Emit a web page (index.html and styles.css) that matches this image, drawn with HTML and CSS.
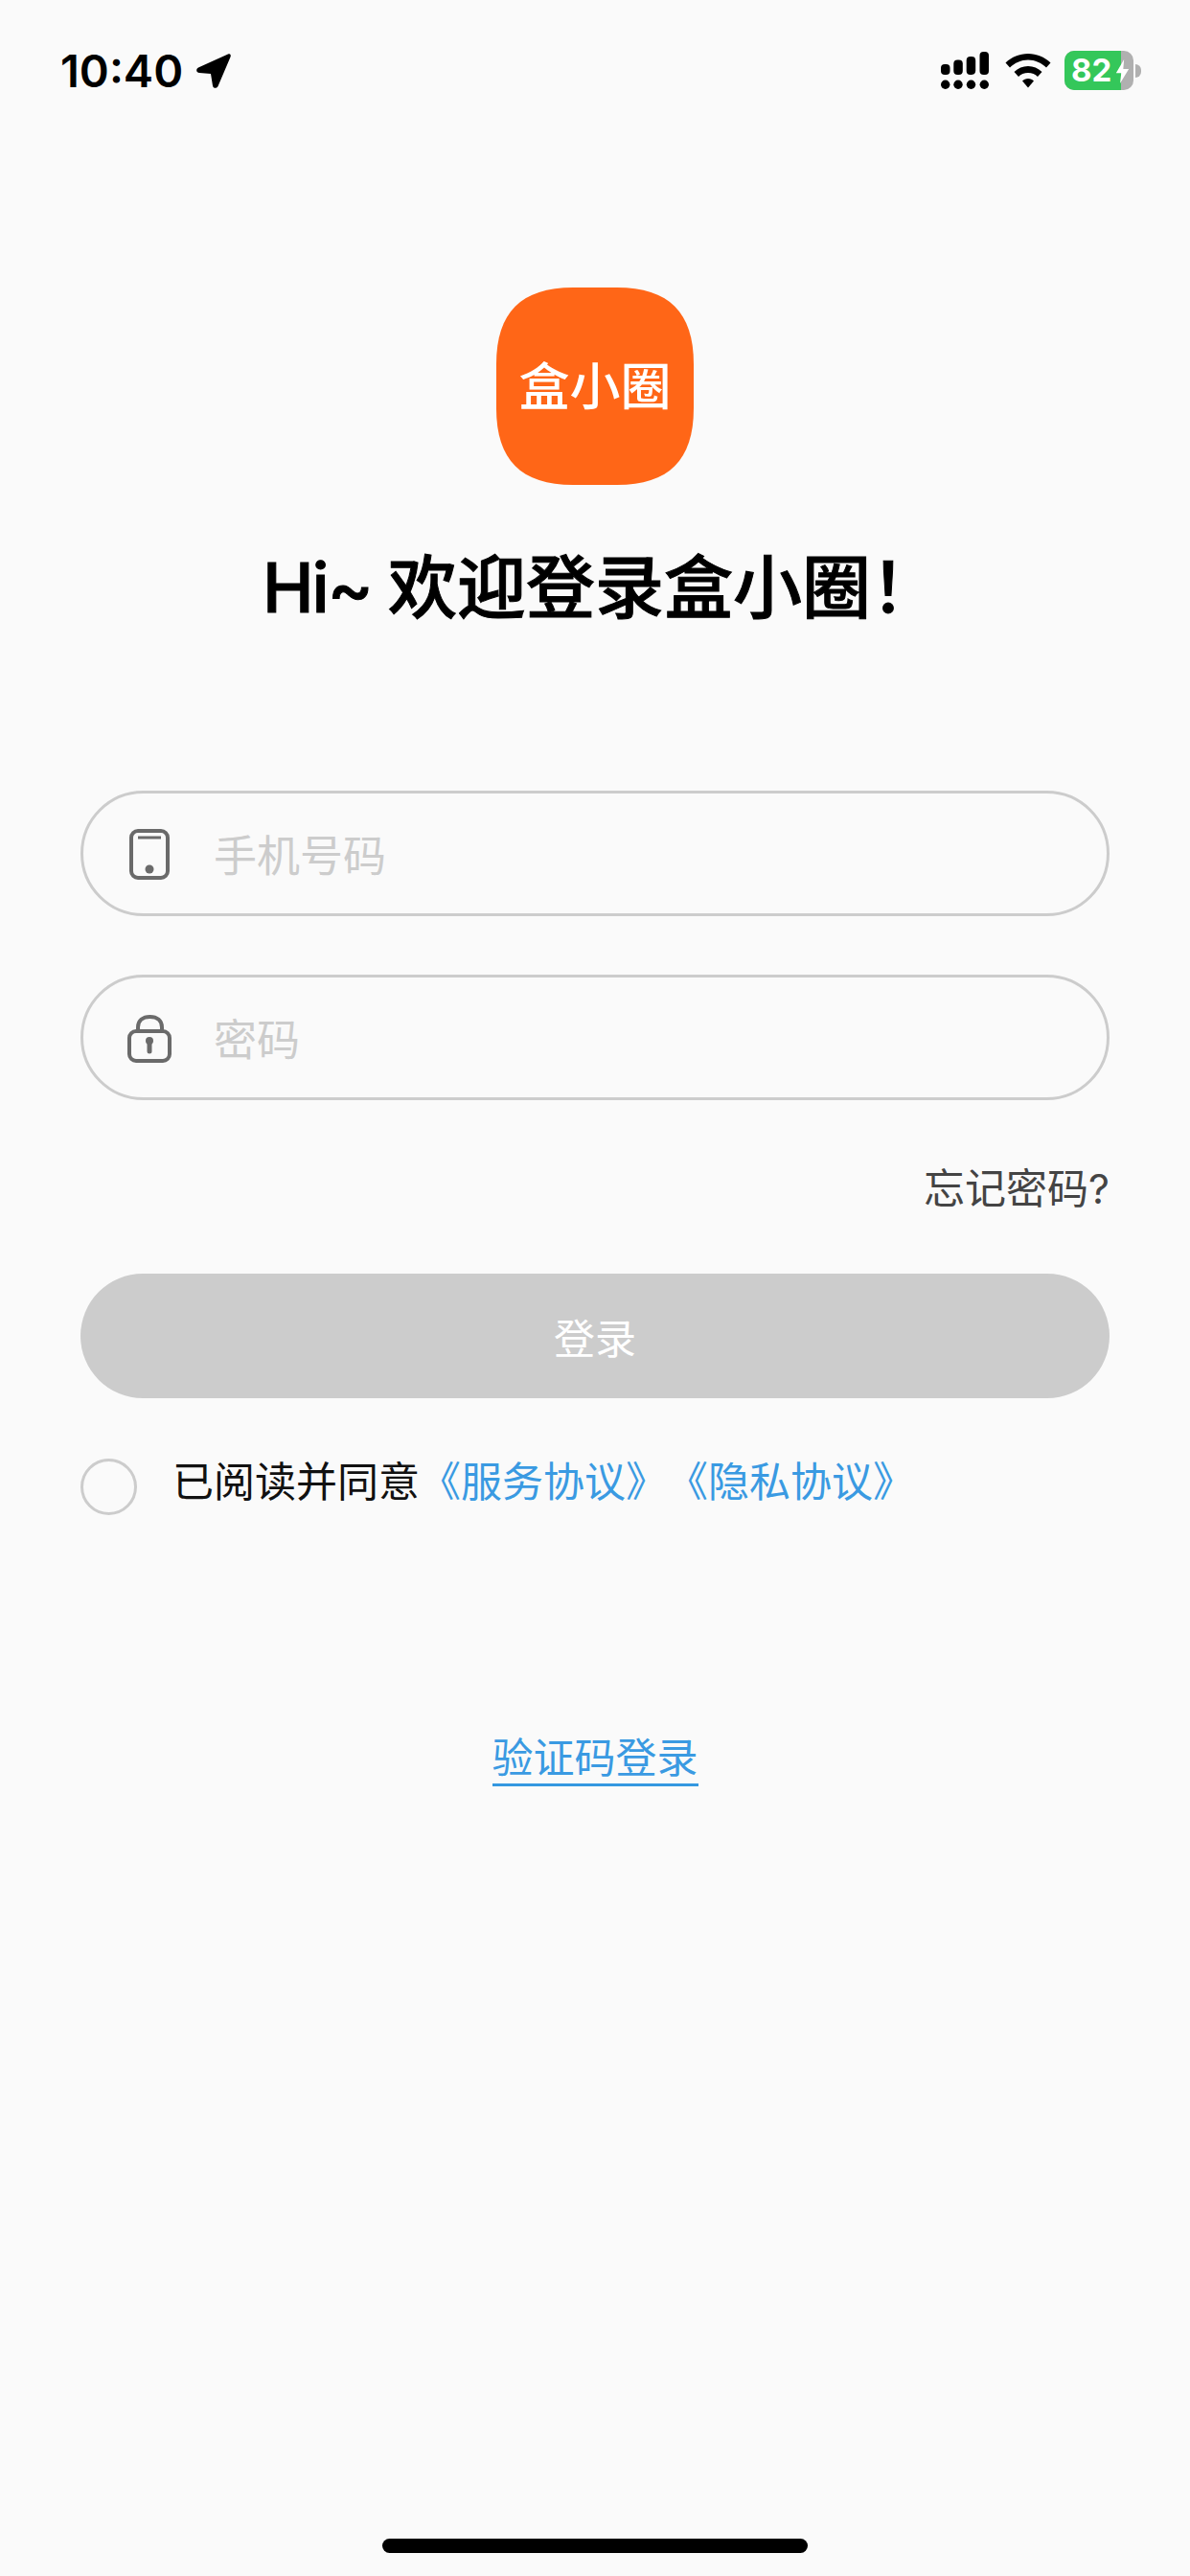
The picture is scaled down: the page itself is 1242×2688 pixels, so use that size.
FILE: index.html
```html
<!DOCTYPE html>
<html>
<head>
    <title>盒小圈</title>
    <link rel="stylesheet" href="styles.css">
</head>
<body>
    <div class="screen">
        <!-- Status bar -->
        <div class="status-bar">
            <div class="status-left">
                <span class="time">10:40</span>
                <svg class="arrow" viewBox="0 0 38 38"><path d="M34 1.500 3 15.500C0 17 1 21 4 21L16 22 18 34.500C18.500 37.500 22.500 37.500 23.500 35L36.500 4.500C37.500 2 36 0.500 34 1.500Z"/></svg>
            </div>
            <div class="status-right">
                <svg class="signal" viewBox="0 0 50 39">
                    <rect x="0" y="13" width="9.500" height="11" rx="4"/>
                    <rect x="13.300" y="8.500" width="9.500" height="15.500" rx="4"/>
                    <rect x="26.700" y="5" width="9.500" height="19" rx="4"/>
                    <rect x="40.500" y="0" width="9.500" height="24" rx="4"/>
                    <circle cx="4.700" cy="34.300" r="4.700"/>
                    <circle cx="18" cy="34.300" r="4.700"/>
                    <circle cx="31.500" cy="34.300" r="4.700"/>
                    <circle cx="45.300" cy="34.300" r="4.700"/>
                </svg>
                <svg class="wifi" viewBox="0 0 48 36">
                    <path d="M24 0C15 0 7 3.500 0.500 9.500L5 14.500C10 9.500 17 6.500 24 6.500S38 9.500 43 14.500L47.500 9.500C41 3.500 33 0 24 0Z"/>
                    <path d="M24 13C18.500 13 13.500 15 9.500 19L14 24C16.500 21.500 20 20 24 20S31.500 21.500 34 24L38.500 19C34.500 15 29.500 13 24 13Z"/>
                    <path d="M24 26C21.500 26 19.500 27 18 28.500L24 35.500 30 28.500C28.500 27 26.500 26 24 26Z"/>
                </svg>
                <div class="battery">
                    <div class="battery-body">
                        <div class="battery-fill"></div>
                        <span class="battery-num">82</span>
                        <svg class="bolt" viewBox="0 0 16 30"><path d="M10 0 0 17H6.500L5 30 16 12H9Z"/></svg>
                    </div>
                    <div class="battery-cap"></div>
                </div>
            </div>
        </div>

        <!-- Logo and title -->
        <div class="logo">
            <svg class="logo-bg" viewBox="0 0 206 206"><path d="M80 0H126C180 0 206 26 206 80V126C206 180 180 206 126 206H80C26 206 0 180 0 126V80C0 26 26 0 80 0Z"/></svg>
            <span class="logo-text">盒小圈</span>
        </div>
        <h1 class="title"><span class="title-latin">Hi~ </span>欢迎登录盒小圈！</h1>

        <!-- Login form -->
        <div class="form">
            <div class="field">
                <svg class="field-icon" viewBox="0 0 46 56" fill="none" stroke="#6a6a6a" stroke-width="4">
                    <rect x="4" y="4" width="38" height="49" rx="7"/>
                    <path d="M11 11H35" stroke-width="3"/>
                    <circle cx="23" cy="44" r="4.500" fill="#6a6a6a" stroke="none"/>
                </svg>
                <span class="placeholder">手机号码</span>
            </div>
            <div class="field field-second">
                <svg class="field-icon" viewBox="0 0 46 56" fill="none" stroke="#6a6a6a" stroke-width="4">
                    <rect x="2" y="21" width="42" height="31" rx="7"/>
                    <path d="M11 21V17C11 10 16 6 23.500 6S36 10 36 17V21"/>
                    <path d="M23 31V42" stroke-width="5" stroke-linecap="round"/>
                    <circle cx="23" cy="31" r="4" fill="#6a6a6a" stroke="none"/>
                </svg>
                <span class="placeholder">密码</span>
            </div>
            <div class="forgot">忘记密码?</div>
            <button class="login-btn">登录</button>
            <div class="agree">
                <span class="radio"></span>
                <span class="agree-text">已阅读并同意<a class="link">《服务协议》</a><a class="link">《隐私协议》</a></span>
            </div>
        </div>

        <div class="code-login"><a class="code-link">验证码登录</a></div>

        <div class="home-bar"></div>
    </div>
</body>
</html>
```

FILE: styles.css
```css
* {
    margin: 0;
    padding: 0;
    box-sizing: border-box;
}
body {
    background-color: #fafafa;
    font-family: "Inter", "Noto Sans CJK SC", sans-serif;
    text-spacing-trim: space-all;
}
.screen {
    position: relative;
    width: 1242px;
    height: 2688px;
    display: flex;
    flex-direction: column;
    align-items: center;
    overflow: hidden;
}

/* Status bar */
.status-bar {
    width: 100%;
    height: 300px;
    padding: 48px 51px 0 63px;
    display: flex;
    justify-content: space-between;
    align-items: flex-start;
}
.status-left {
    display: flex;
    align-items: center;
    gap: 13px;
}
.time {
    font-size: 47px;
    line-height: 52px;
    font-weight: 600;
    color: #000;
}
.arrow {
    width: 38px;
    height: 38px;
    fill: #000;
}
.status-right {
    display: flex;
    align-items: center;
    margin-top: 5px;
}
.signal {
    width: 50px;
    height: 39px;
    fill: #000;
    margin-right: 17px;
}
.wifi {
    width: 48px;
    height: 36px;
    fill: #000;
    margin-right: 14px;
}
.battery {
    display: flex;
    align-items: center;
}
.battery-body {
    position: relative;
    width: 72px;
    height: 41px;
    border-radius: 10px;
    background-color: #b0b0b0;
    overflow: hidden;
    display: flex;
    align-items: center;
}
.battery-fill {
    position: absolute;
    left: 0;
    top: 0;
    bottom: 0;
    width: 59px;
    background-color: #34c75a;
}
.battery-num {
    position: relative;
    margin-left: 7px;
    font-size: 33px;
    line-height: 41px;
    font-weight: 700;
    color: #fff;
}
.bolt {
    position: absolute;
    left: 53px;
    top: 9px;
    width: 15px;
    height: 25px;
    fill: #fff;
}
.battery-cap {
    width: 6px;
    height: 14px;
    margin-left: 2px;
    background-color: #b0b0b0;
    border-radius: 0 6px 6px 0;
}

/* Logo */
.logo {
    position: relative;
    width: 206px;
    height: 206px;
    display: flex;
    align-items: center;
    justify-content: center;
}
.logo-bg {
    position: absolute;
    left: 0;
    top: 0;
    width: 206px;
    height: 206px;
    fill: #ff6617;
}
.logo-text {
    position: relative;
    margin-bottom: 7px;
    font-family: "Noto Sans CJK SC", sans-serif;
    font-size: 53px;
    line-height: 60px;
    font-weight: 500;
    color: #fff;
}
.title {
    margin-top: 57px;
    padding-left: 13px;
    font-size: 72px;
    line-height: 100px;
    font-weight: 500;
    color: #000;
    -webkit-text-stroke: 1px #000;
}
.title-latin {
    letter-spacing: -2px;
}

/* Form */
.form {
    width: 1074px;
    margin-top: 162px;
}
.field {
    height: 131px;
    border: 3px solid #cccccc;
    border-radius: 66px;
    display: flex;
    align-items: center;
    padding-left: 46px;
}
.field-second {
    margin-top: 61px;
}
.field-icon {
    width: 46px;
    height: 56px;
}
.placeholder {
    margin-left: 44px;
    font-size: 45px;
    color: #cccccc;
}
.forgot {
    margin-top: 66px;
    text-align: right;
    font-size: 43px;
    line-height: 52px;
    color: #444;
}
.login-btn {
    display: block;
    width: 100%;
    height: 130px;
    margin-top: 63px;
    border: none;
    border-radius: 65px;
    background-color: #cccccc;
    color: #fff;
    font-family: inherit;
    font-size: 43px;
}
.agree {
    margin-top: 62px;
    display: flex;
    align-items: center;
}
.radio {
    width: 59px;
    height: 59px;
    border: 3px solid #cccccc;
    border-radius: 50%;
}
.agree-text {
    margin-left: 37px;
    margin-bottom: 10px;
    font-size: 43px;
    line-height: 50px;
    color: #111;
}
.link {
    color: #3a9ae2;
}
.code-login {
    margin-top: 226px;
}
.code-link {
    display: block;
    font-size: 43px;
    line-height: 54px;
    color: #3a9ae2;
    border-bottom: 3px solid #3498e0;
}

/* Home indicator */
.home-bar {
    position: absolute;
    left: 399px;
    bottom: 24px;
    width: 444px;
    height: 15px;
    border-radius: 8px;
    background-color: #000;
}
```
